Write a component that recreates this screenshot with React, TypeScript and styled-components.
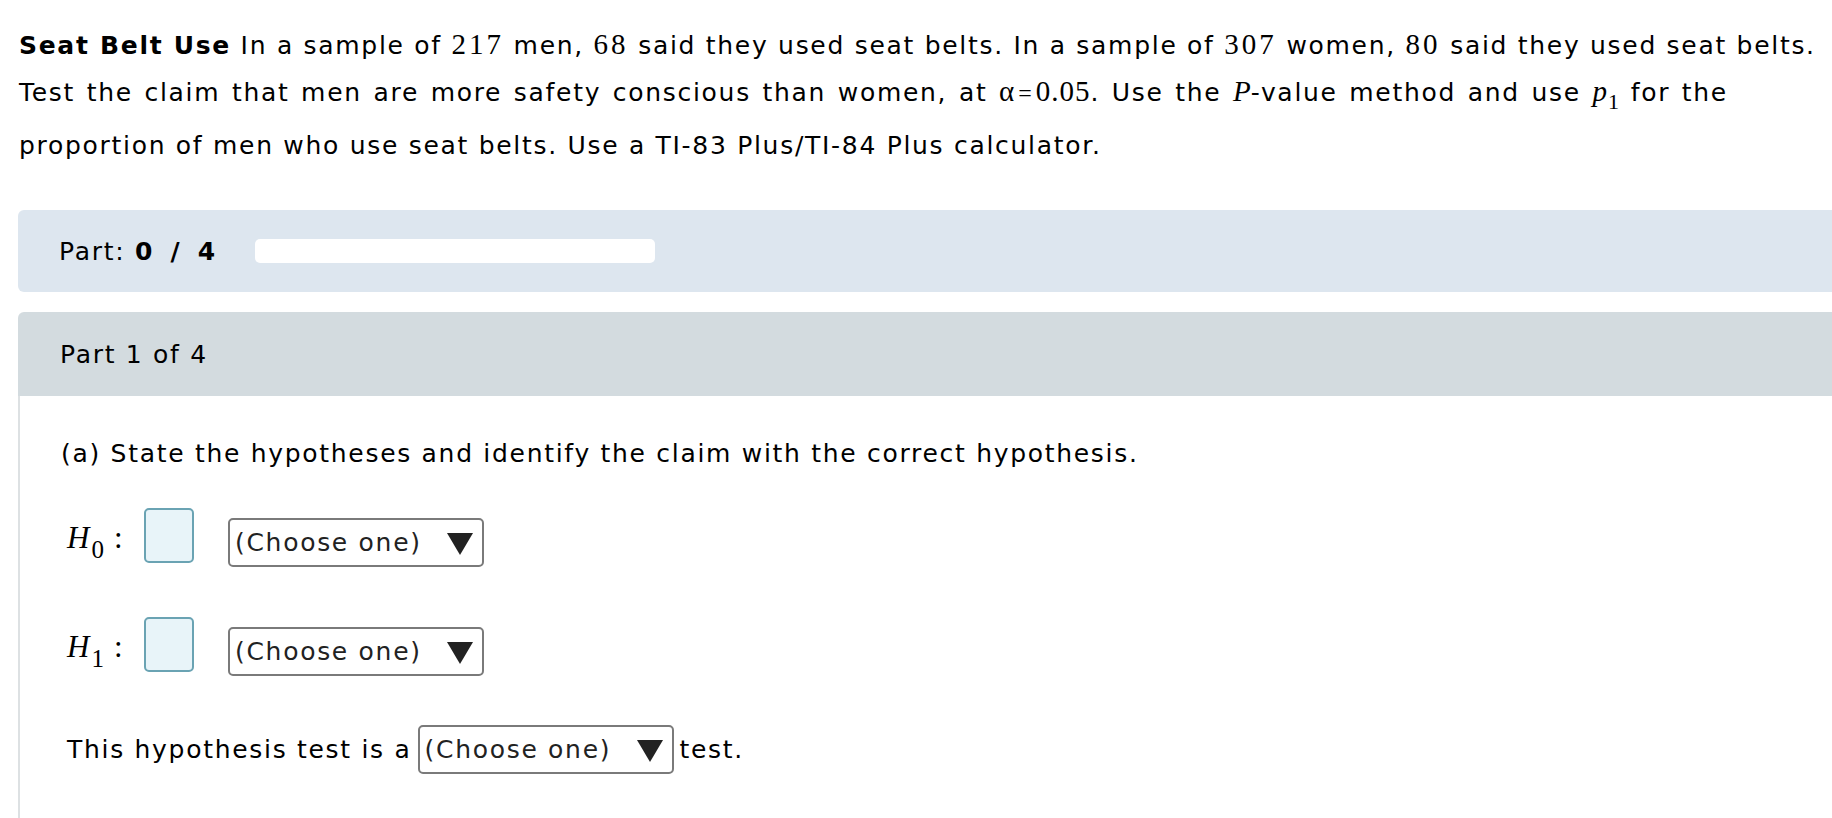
import styled, { createGlobalStyle } from 'styled-components'

const GlobalStyle = createGlobalStyle`
  html, body {
    margin: 0;
    padding: 0;
    background: #fff;
    overflow: hidden;
  }
  body {
    font-family: 'DejaVu Sans', Verdana, sans-serif;
    letter-spacing: 1.7px;
    color: #000;
  }
`

const Page = styled.div`
  width: 1832px;
  padding: 21px 0 0 18px;
  box-sizing: border-box;
`

const Problem = styled.div`
  font-size: 25px;
  line-height: 47px;
  margin: 0 0 41px 1px;
  white-space: nowrap;
`

const Line = styled.div<{ $tall?: boolean }>`
  height: ${p => (p.$tall ? 54 : 47)}px;
  word-spacing: ${p => (p.$tall ? 2 : 0)}px;
`

const Bold = styled.b`
  font-weight: 700;
`

const Num = styled.span<{ $tight?: boolean }>`
  font-family: 'Liberation Serif', 'Times New Roman', serif;
  font-size: 29px;
  letter-spacing: ${p => (p.$tight ? 1 : 3)}px;
`

const Eq = styled.span`
  margin: 0 3px 0 3px;
  font-size: 24px;
`

const Ital = styled(Num)`
  font-style: italic;
  letter-spacing: 0;
`

const Sub = styled.sub`
  font-family: 'Liberation Serif', 'Times New Roman', serif;
  font-style: normal;
  font-size: 22px;
  line-height: 0;
  vertical-align: -8px;
  margin-left: 1px;
`

const ProgressPanel = styled.div`
  display: flex;
  align-items: center;
  height: 82px;
  margin-right: -20px;
  padding-left: 41px;
  background: #dde6ef;
  border-radius: 6px 0 0 6px;
  font-size: 25px;
`

const ProgressLabel = styled.span`
  width: 196px;
`

const Score = styled.b`
  font-weight: 700;
  word-spacing: 6px;
`

const ProgressBar = styled.div`
  width: 400px;
  height: 24px;
  border-radius: 5px;
  background: #fff;
`

const Section = styled.div`
  margin-top: 20px;
  margin-right: -20px;
`

const SectionHeader = styled.div`
  display: flex;
  align-items: center;
  height: 84px;
  padding-left: 42px;
  background: #d3dbdf;
  border-radius: 6px 0 0 0;
  font-size: 25px;
`

const SectionBody = styled.div`
  border-left: 2px solid #dde1e3;
  padding: 38px 0 60px 41px;
  font-size: 25px;
`

const Question = styled.div`
  line-height: 40px;
  margin-bottom: 35px;
`

const HypRow = styled.div`
  display: flex;
  align-items: flex-end;
  height: 58px;
  margin-bottom: 51px;
  padding-left: 6px;
`

const HypLabel = styled.span`
  display: flex;
  align-items: baseline;
  align-self: center;
  width: 77px;
  font-family: 'Liberation Serif', 'Times New Roman', serif;
  font-size: 31px;
  letter-spacing: 0;
`

const HypLetter = styled.i`
  font-style: italic;
`

const HypSub = styled.span`
  font-size: 25px;
  position: relative;
  top: 10px;
  margin: 0 10px 0 2px;
`

const AnswerBox = styled.div`
  width: 46px;
  height: 51px;
  border: 2px solid #6aa3b3;
  border-radius: 5px;
  background: #e8f4f9;
  margin: 0 34px 4px 0;
`

const Select = styled.div`
  display: inline-flex;
  align-items: center;
  justify-content: space-between;
  box-sizing: border-box;
  width: 256px;
  height: 49px;
  padding: 0 9px 0 5px;
  border: 2px solid #7a7a7a;
  border-radius: 5px;
  background: #fff;
  color: #222;
  font-size: 25px;
`

const Arrow = styled.span`
  width: 0;
  height: 0;
  border-left: 13px solid transparent;
  border-right: 13px solid transparent;
  border-top: 22px solid #222;
  margin-top: 2px;
`

const TestRow = styled.div`
  display: flex;
  align-items: center;
  gap: 6px;
  padding-left: 6px;
  margin-top: -2px;
`

const ChooseOne = () => (
  <Select>
    <span>(Choose one)</span>
    <Arrow />
  </Select>
)

export default function App() {
  return (
    <>
      <GlobalStyle />
      <Page>
        <Problem>
          <Line>
            <Bold>Seat Belt Use</Bold> In a sample of <Num>217</Num> men, <Num>68</Num> said they used seat
            belts. In a sample of <Num>307</Num> women, <Num>80</Num> said they used seat belts.
          </Line>
          <Line $tall>
            Test the claim that men are more safety conscious than women, at{' '}
            <Num $tight>
              α<Eq>=</Eq>0.05
            </Num>
            . Use the <Ital>P</Ital>-value method and use{' '}
            <Ital>
              p<Sub>1</Sub>
            </Ital>{' '}
            for the
          </Line>
          <Line>proportion of men who use seat belts. Use a TI-83 Plus/TI-84 Plus calculator.</Line>
        </Problem>

        <ProgressPanel>
          <ProgressLabel>
            Part: <Score>0 / 4</Score>
          </ProgressLabel>
          <ProgressBar />
        </ProgressPanel>

        <Section>
          <SectionHeader>Part 1 of 4</SectionHeader>
          <SectionBody>
            <Question>(a) State the hypotheses and identify the claim with the correct hypothesis.</Question>
            <HypRow>
              <HypLabel>
                <HypLetter>H</HypLetter>
                <HypSub>0</HypSub>:
              </HypLabel>
              <AnswerBox />
              <ChooseOne />
            </HypRow>
            <HypRow>
              <HypLabel>
                <HypLetter>H</HypLetter>
                <HypSub>1</HypSub>:
              </HypLabel>
              <AnswerBox />
              <ChooseOne />
            </HypRow>
            <TestRow>
              <span>This hypothesis test is a</span>
              <ChooseOne />
              <span>test.</span>
            </TestRow>
          </SectionBody>
        </Section>
      </Page>
    </>
  )
}
